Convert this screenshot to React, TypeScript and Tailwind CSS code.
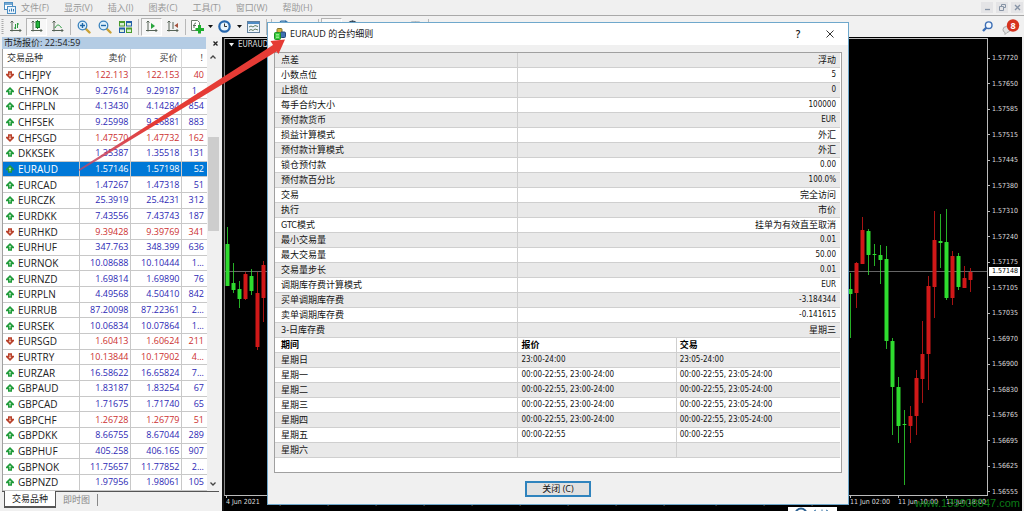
import { ReactNode } from "react";
import { Crosshair, FilePlus, Minus, MousePointer, MoveDiagonal, TrendingUp, Type } from "lucide-react";

type Quote = [symbol: string, bid: string, ask: string, spread: string, up: boolean];

const quotes: Quote[] = [
  ["CHFJPY", "122.113", "122.153", "40", false],
  ["CHFNOK", "9.27614", "9.29187", "1...", true],
  ["CHFPLN", "4.13430", "4.14284", "854", true],
  ["CHFSEK", "9.25998", "9.26881", "883", true],
  ["CHFSGD", "1.47570", "1.47732", "162", false],
  ["DKKSEK", "1.35387", "1.35518", "131", true],
  ["EURAUD", "1.57146", "1.57198", "52", true],
  ["EURCAD", "1.47267", "1.47318", "51", true],
  ["EURCZK", "25.3919", "25.4231", "312", true],
  ["EURDKK", "7.43556", "7.43743", "187", true],
  ["EURHKD", "9.39428", "9.39769", "341", false],
  ["EURHUF", "347.763", "348.399", "636", true],
  ["EURNOK", "10.08688", "10.10444", "1...", true],
  ["EURNZD", "1.69814", "1.69890", "76", true],
  ["EURPLN", "4.49568", "4.50410", "842", true],
  ["EURRUB", "87.20098", "87.22361", "2...", true],
  ["EURSEK", "10.06834", "10.07864", "1...", true],
  ["EURSGD", "1.60413", "1.60624", "211", false],
  ["EURTRY", "10.13844", "10.17902", "4...", false],
  ["EURZAR", "16.58622", "16.65824", "7...", true],
  ["GBPAUD", "1.83187", "1.83254", "67", true],
  ["GBPCAD", "1.71675", "1.71740", "65", true],
  ["GBPCHF", "1.26728", "1.26779", "51", false],
  ["GBPDKK", "8.66755", "8.67044", "289", true],
  ["GBPHUF", "405.258", "406.165", "907", true],
  ["GBPNOK", "11.75657", "11.77852", "2...", true],
  ["GBPNZD", "1.97956", "1.98061", "105", true],
];

const specs = [
  ["点差", "浮动"],
  ["小数点位", "5"],
  ["止损位", "0"],
  ["每手合约大小", "100000"],
  ["预付款货币", "EUR"],
  ["损益计算模式", "外汇"],
  ["预付款计算模式", "外汇"],
  ["锁仓预付款", "0.00"],
  ["预付款百分比", "100.0%"],
  ["交易", "完全访问"],
  ["执行", "市价"],
  ["GTC模式", "挂单为有效直至取消"],
  ["最小交易量", "0.01"],
  ["最大交易量", "50.00"],
  ["交易量步长", "0.01"],
  ["调期库存费计算模式", "EUR"],
  ["买单调期库存费", "-3.184344"],
  ["卖单调期库存费", "-0.141615"],
  ["3-日库存费", "星期三"],
];

const sessions = [
  ["星期日", "23:00-24:00", "23:05-24:00"],
  ["星期一", "00:00-22:55, 23:00-24:00", "00:00-22:55, 23:05-24:00"],
  ["星期二", "00:00-22:55, 23:00-24:00", "00:00-22:55, 23:05-24:00"],
  ["星期三", "00:00-22:55, 23:00-24:00", "00:00-22:55, 23:05-24:00"],
  ["星期四", "00:00-22:55, 23:00-24:00", "00:00-22:55, 23:05-24:00"],
  ["星期五", "00:00-22:55", "00:00-22:55"],
  ["星期六", "", ""],
];

const prices = [
  "1.57720", "1.57650", "1.57585", "1.57515", "1.57445", "1.57380", "1.57310", "1.57240", "1.57175",
  "1.57105", "1.57035", "1.56970", "1.56900", "1.56830", "1.56765", "1.56695", "1.56625", "1.56555",
];

const times = [
  "4 Jun 2021", "7 Jun 02:00", "7 Jun 10:00", "7 Jun 18:00", "8 Jun 02:00", "8 Jun 10:00", "8 Jun 18:00",
  "9 Jun 02:00", "9 Jun 10:00", "9 Jun 18:00", "10 Jun 02:00", "10 Jun 10:00", "10 Jun 18:00",
  "11 Jun 02:00", "11 Jun 10:00", "11 Jun 18:00",
];

// x, high, body top, body bottom, low, rising
const candles: [number, number, number, number, number, boolean][] = [
  [227, 227, 244, 286, 286, true],
  [233, 263, 283, 290, 293, true],
  [239, 281, 289, 299, 308, true],
  [245, 272, 274, 299, 300, false],
  [251, 269, 276, 291, 295, true],
  [257, 272, 293, 347, 350, false],
  [263, 261, 265, 298, 322, false],
  [850, 273, 289, 294, 338, true],
  [856, 262, 263, 293, 308, false],
  [862, 217, 230, 264, 264, false],
  [868, 229, 231, 255, 275, true],
  [874, 244, 254, 255, 266, true],
  [880, 245, 255, 260, 284, true],
  [886, 246, 259, 341, 349, true],
  [892, 338, 341, 387, 435, true],
  [898, 377, 387, 426, 443, true],
  [904, 410, 424, 425, 485, true],
  [910, 406, 416, 426, 443, false],
  [916, 370, 378, 416, 435, false],
  [922, 321, 354, 379, 403, false],
  [928, 276, 286, 354, 390, false],
  [934, 211, 240, 287, 318, false],
  [940, 214, 241, 243, 268, true],
  [946, 209, 242, 298, 300, true],
  [952, 251, 256, 298, 305, false],
  [958, 253, 256, 287, 290, true],
  [964, 266, 278, 288, 288, false],
  [970, 268, 272, 280, 292, false],
];

const menus = ["文件(F)", "显示(V)", "插入(I)", "图表(C)", "工具(T)", "窗口(W)", "帮助(H)"];

function ToolButton({ label, pressed, children }: { label: string; pressed?: boolean; children: ReactNode }) {
  return (
    <button
      type="button"
      aria-label={label}
      className={`flex h-[18px] w-[21px] shrink-0 items-center justify-center border ${
        pressed ? "border-[#b4b4b4] border-b-white border-r-white bg-[#f7f7f7]" : "border-transparent"
      }`}
    >
      {children}
    </button>
  );
}

function Divider() {
  return <span className="mx-[2px] h-4 w-px shrink-0 bg-[#b8b8b8]" />;
}

function Caret() {
  return (
    <button type="button" aria-label="更多" className="flex w-2 shrink-0 justify-center">
      <svg width="5" height="3" viewBox="0 0 5 3"><path d="M0 0h5L2.500 3z" fill="#111" /></svg>
    </button>
  );
}

function Axes({ children }: { children?: ReactNode }) {
  return (
    <svg width="13" height="13" viewBox="0 0 13 13" fill="none">
      <path d="M3 1v10.500M1 10.500h11M1.500 2.500L3 1l1.500 1.500M10.500 9L12 10.500 10.500 12" stroke="#566356" />
      {children}
    </svg>
  );
}

function Magnifier({ plus }: { plus?: boolean }) {
  return (
    <svg width="14" height="14" viewBox="0 0 14 14" fill="none">
      <path d="M8.500 8.500L12.500 12.500" stroke="#c9a136" strokeWidth="2.400" strokeLinecap="round" />
      <circle cx="5.500" cy="5.500" r="4.300" fill="#dff0fb" stroke="#3c83bd" strokeWidth="1.300" />
      <path d={plus ? "M3 5.500h5M5.500 3v5" : "M3 5.500h5"} stroke="#1f68a8" strokeWidth="1.400" />
    </svg>
  );
}

function DirectionIcon({ up }: { up: boolean }) {
  return (
    <svg width="8" height="8" viewBox="0 0 8 8" className="shrink-0">
      <g transform={up ? undefined : "rotate(180 4 4)"}>
        <path d="M4 0L8 4V5.300H6V7.700H2V5.300H0V4z" fill={up ? "#1f9a3a" : "#b8402a"} />
        <path d="M4 2.200L5.400 4H4.500V6.300H3.500V4H2.600z" fill={up ? "#c9f2c9" : "#f8d0c0"} />
      </g>
    </svg>
  );
}

function MenuBar() {
  return (
    <header className="flex h-4 shrink-0 items-center border-b border-[#a9a9a9] bg-[#f0f0f0] text-[9px] leading-[14px] text-[#999]">
      <svg width="12" height="12" viewBox="0 0 12 12" className="mr-[5px] ml-1" fill="none">
        <rect x="0.500" y="0.500" width="8" height="7" fill="#fff" stroke="#4d8fc4" />
        <path d="M1 2h7" stroke="#4d8fc4" strokeWidth="1.500" />
        <rect x="3.500" y="4.500" width="8" height="7" fill="#eaf4fc" stroke="#4d8fc4" />
        <path d="M5.500 9.500v-2M7.500 9.500V6.500M9.500 9.500V7" stroke="#3b7ab0" />
      </svg>
      <nav className="flex gap-[15px]">
        {menus.map((m) => (
          <button key={m} type="button" className="whitespace-nowrap">{m}</button>
        ))}
      </nav>
      <div className="mr-px ml-auto flex gap-[3px]">
        <button type="button" aria-label="最小化" className="flex h-[11px] w-3 items-center justify-center bg-[#e4e4e6]">
          <svg width="7" height="7" viewBox="0 0 7 7"><path d="M1 5.500h5" stroke="#8794a6" strokeWidth="1.300" /></svg>
        </button>
        <button type="button" aria-label="还原" className="flex h-[11px] w-3 items-center justify-center bg-[#e4e4e6]">
          <svg width="7" height="7" viewBox="0 0 7 7" fill="none" stroke="#8794a6">
            <path d="M2.500 2.500v-2h4v3h-2M0.500 2.500h4v4h-4z" />
          </svg>
        </button>
        <button type="button" aria-label="关闭" className="flex h-[11px] w-3 items-center justify-center bg-[#e4e4e6]">
          <svg width="7" height="7" viewBox="0 0 7 7"><path d="M1 1l5 5M6 1L1 6" stroke="#8794a6" strokeWidth="1.300" /></svg>
        </button>
      </div>
    </header>
  );
}

function Toolbar() {
  return (
    <div className="flex h-[21px] shrink-0 items-center overflow-hidden bg-[#f1f1f1]">
      <svg width="3" height="16" viewBox="0 0 3 16" className="mr-px ml-px shrink-0">
        <path d="M1.500 0v16" stroke="#aaa" strokeWidth="2" strokeDasharray="1 1" />
      </svg>
      <ToolButton label="柱状图">
        <Axes><path d="M6.500 4v5M8.500 3v5M6.500 8H5M8.500 4H10" stroke="#2b9a3e" /></Axes>
      </ToolButton>
      <ToolButton label="阴阳烛" pressed>
        <Axes>
          <path d="M7.500 0v9" stroke="#1d8f30" />
          <rect x="6" y="1.500" width="3.500" height="6" fill="#23b53b" stroke="#157a27" />
        </Axes>
      </ToolButton>
      <ToolButton label="折线图">
        <Axes><path d="M4 8C6 4 8 4 10.500 8" stroke="#2b9a3e" /></Axes>
      </ToolButton>
      <Divider />
      <ToolButton label="放大"><Magnifier plus /></ToolButton>
      <ToolButton label="缩小"><Magnifier /></ToolButton>
      <ToolButton label="平铺窗口">
        <svg width="13" height="12" viewBox="0 0 13 12">
          <path d="M0 0h6v5.500H0zM7 6.500h6V12H7z" fill="#4a9c2d" />
          <path d="M7 0h6v5.500H7zM0 6.500h6V12H0z" fill="#235fa8" />
          <path d="M1 2h4v2.500H1zM8 2h4v2.500H8zM1 8.500h4V11H1zM8 8.500h4V11H8z" fill="#d9efd6" />
        </svg>
      </ToolButton>
      <Divider />
      <ToolButton label="自动滚动" pressed>
        <Axes><path d="M6 3l4 3-4 3z" fill="#27a53c" /></Axes>
      </ToolButton>
      <ToolButton label="图表平移">
        <Axes>
          <path d="M7 2v7" stroke="#566356" />
          <path d="M12 3L8.500 5.500 12 8z" fill="#a5523c" />
        </Axes>
      </ToolButton>
      <Divider />
      <button type="button" aria-label="指标" className="flex w-[18px] shrink-0 justify-center">
        <svg width="14" height="14" viewBox="0 0 14 14" fill="none">
          <path d="M1.500 0.500h6l2 2v8h-8z" fill="#fff" stroke="#6d7d6d" />
          <path d="M4 8c0-3 0-5 2-5M3 5.500h3" stroke="#58705a" />
          <path d="M9.500 5v8.500M5.500 9.500H14" stroke="#1dae2d" strokeWidth="3" />
        </svg>
      </button>
      <Caret />
      <ToolButton label="时间周期">
        <svg width="13" height="13" viewBox="0 0 13 13" fill="none">
          <circle cx="6.500" cy="6.500" r="5.200" fill="#e8f3fc" stroke="#2767ad" strokeWidth="2.200" />
          <path d="M6.500 3.500v3H9" stroke="#333" />
        </svg>
      </ToolButton>
      <Caret />
      <ToolButton label="模板">
        <svg width="13" height="12" viewBox="0 0 13 12" fill="none">
          <rect x="0.500" y="0.500" width="12" height="11" fill="#eef5fb" stroke="#62809d" />
          <path d="M1 2h11" stroke="#4f8cc4" strokeWidth="2" />
          <path d="M2 6l2-1 2 1 2-1.500L11 5.500M2 9.500l2-1 2 1 2-1.500 3 1" stroke="#637d63" />
        </svg>
      </ToolButton>
      <Divider />
      <Divider />
      <ToolButton label="新订单"><FilePlus size={13} color="#2f6fa8" /></ToolButton>
      <ToolButton label="智能交易"><TrendingUp size={13} color="#2f6fa8" /></ToolButton>
      <Divider />
      <ToolButton label="光标" pressed><MousePointer size={12} color="#345" /></ToolButton>
      <ToolButton label="十字线"><Crosshair size={13} color="#345" /></ToolButton>
      <ToolButton label="水平线"><Minus size={13} color="#345" /></ToolButton>
      <ToolButton label="趋势线"><MoveDiagonal size={13} color="#345" /></ToolButton>
      <ToolButton label="文字"><Type size={13} color="#345" /></ToolButton>
      <Divider />
      <div className="mr-1 ml-auto flex items-center gap-[9px]">
        <button type="button" aria-label="搜索">
          <svg width="11" height="11" viewBox="0 0 11 11" fill="none" stroke="#3d6fb5">
            <path d="M4.500 6.500L1 10" strokeWidth="2.400" />
            <circle cx="6.700" cy="4.200" r="3.300" fill="#f4f9ff" strokeWidth="1.400" />
          </svg>
        </button>
        <button type="button" aria-label="8 条通知">
          <svg width="18" height="16" viewBox="0 0 18 16">
            <path d="M1 10.500a3.500 3 0 1 1 4 3L3 15.500v-2A3 3 0 0 1 1 10.500z" fill="#e3e3e3" stroke="#aaa" />
            <circle cx="11" cy="6.500" r="6.200" fill="#d5331f" />
            <text x="11" y="10" fontSize="9" fontWeight="700" fill="#fff" textAnchor="middle">8</text>
          </svg>
        </button>
      </div>
    </div>
  );
}

function MarketWatch() {
  return (
    <aside className="flex w-[222px] shrink-0 flex-col bg-[#f0f0f0] pl-[2px]">
      <div className="flex h-3 shrink-0 items-center justify-between pr-1">
        <h2 className="w-[204px] bg-[#b4cce4] pl-[2px] text-[9px] leading-3 text-[#222]">市场报价: 22:54:59</h2>
        <button type="button" aria-label="关闭市场报价">
          <svg width="5" height="5" viewBox="0 0 5 5"><path d="M0.500 0.500l4 4M4.500 0.500l-4 4" stroke="#222" strokeWidth="1.300" /></svg>
        </button>
      </div>
      <div className="flex min-h-0 flex-1 border-l border-[#a0a0a0]">
        <table className="h-full w-[204px] table-fixed border-collapse bg-white text-right text-[9px] leading-[14px] text-[#2c28b4]">
          <colgroup>
            <col className="w-[76px]" />
            <col className="w-[51px]" />
            <col className="w-[51px]" />
            <col />
          </colgroup>
          <thead>
            <tr className="h-[18px] border-b border-[#c8c8c8] text-[#333]">
              <th className="border-r border-[#d8d8d8] pl-1 text-left font-normal">交易品种</th>
              <th className="border-r border-[#d8d8d8] pr-[3px] font-normal">卖价</th>
              <th className="border-r border-[#d8d8d8] pr-[3px] font-normal">买价</th>
              <th className="pr-1 font-normal">!</th>
            </tr>
          </thead>
          <tbody>
            {quotes.map(([symbol, bid, ask, spread, up]) => {
              const selected = symbol === "EURAUD";
              const tone = selected ? "bg-[#0078d7] text-white" : up ? "" : "text-[#cc3030]";
              return (
                <tr key={symbol} className={`border-b border-[#c8c8c8] ${tone}`}>
                  <td className="border-r border-[#c8c8c8] p-0 pl-[3px]">
                    <div className={`flex items-center gap-1 text-[10px] ${selected ? "text-white" : "text-[#222]"}`}>
                      <DirectionIcon up={up} />
                      {symbol}
                    </div>
                  </td>
                  <td className="border-r border-[#c8c8c8] p-0 pr-px">{bid}</td>
                  <td className="border-r border-[#c8c8c8] p-0 pr-px">{ask}</td>
                  <td className="p-0 pr-[3px]">{spread}</td>
                </tr>
              );
            })}
          </tbody>
        </table>
        <div className="flex w-3 flex-col items-center py-1">
          <svg width="6" height="8" viewBox="0 0 6 8" fill="none"><path d="M0.500 5.500L3 3l2.500 2.500" stroke="#444" strokeWidth="1.300" /></svg>
          <div className="flex w-full flex-1 flex-col">
            <div className="flex-[76]" />
            <div className="ml-px flex-[94] bg-[#cdcdcd]" />
            <div className="flex-[249]" />
          </div>
          <svg width="6" height="6" viewBox="0 0 6 6" fill="none"><path d="M0.500 1.500L3 4l2.500-2.500" stroke="#444" strokeWidth="1.300" /></svg>
        </div>
      </div>
      <div className="mr-[3px] flex h-5 shrink-0 items-start border-t border-[#555] pl-[2px] text-[9px] leading-[14px]">
        <button type="button" className="-mt-px h-[17px] border border-t-0 border-b-2 border-[#555] bg-white px-[7px] text-[#222]">交易品种</button>
        <button type="button" className="mt-[2px] border-r border-[#888] px-[7px] leading-3 text-[#888]">即时图</button>
      </div>
    </aside>
  );
}

function Chart() {
  return (
    <main className="mr-[2px] flex min-w-0 flex-1 flex-col border-l-2 border-[#111] bg-black pt-px font-['DejaVu_Sans_Condensed','Noto_Sans_CJK_SC',sans-serif] text-[7px] leading-2 text-[#ddd]">
      <div className="flex min-h-0 flex-1">
        <div className="relative min-w-0 flex-1 border border-[#bbb] border-l-[#888]">
          <svg viewBox="225 39 762 456" preserveAspectRatio="none" className="absolute inset-0 h-full w-full" aria-hidden="true">
            <path d="M225 271.500H987" stroke="#666" />
            {candles.map(([x, high, top, bottom, low, rising]) => (
              <g key={x} fill={rising ? "#2fdc2f" : "#d01818"}>
                <rect x={x} y={high} width="1" height={low - high} opacity="0.800" />
                <rect x={x - 1.5} y={top} width="4" height={bottom - top} rx="0.500" />
              </g>
            ))}
          </svg>
          <p className="relative flex items-center gap-1 pt-[2px] pl-1 text-[8px]">
            <svg width="5" height="4" viewBox="0 0 5 4"><path d="M0 0h5L2.500 3.500z" fill="#eee" /></svg>
            EURAUD,H1
          </p>
        </div>
        <ul className="relative flex w-[34px] flex-col justify-between pt-4">
          {prices.map((p) => (
            <li key={p} className="flex items-center gap-[2px]">
              <span className="h-px w-[2px] bg-[#bbb]" />
              {p}
            </li>
          ))}
          <li className="absolute top-1/2 right-[2px] left-px bg-white pl-[3px] leading-[9px] text-black">1.57148</li>
        </ul>
      </div>
      <ul className="flex h-[15px] shrink-0 overflow-hidden pl-[2px]">
        {times.map((t) => (
          <li key={t} className="w-12 shrink-0 whitespace-nowrap">
            <span className="block h-[2px] w-px bg-[#bbb]" />
            {t}
          </li>
        ))}
      </ul>
    </main>
  );
}

function SpecDialog() {
  return (
    <section
      role="dialog"
      aria-labelledby="spec-title"
      className="absolute top-[22px] right-[175px] left-[267px] border border-[#6fa8cc] bg-[#f0f0f0] text-[#111]"
    >
      <div className="flex h-[22px] items-center bg-white pr-3 pl-[6px]">
        <svg width="12" height="12" viewBox="0 0 12 12">
          <rect x="3" y="0.500" width="5" height="5" rx="1" fill="#d5b13d" stroke="#84702a" />
          <rect x="6.500" y="4" width="5" height="5.500" rx="1" fill="#3f6fb3" stroke="#27477a" />
          <rect x="0.500" y="4.500" width="6" height="7" rx="1" fill="#38cc38" stroke="#1f8f26" />
          <path d="M2 6.500h3M2 8h3M2 9.500h3" stroke="#b4f3b0" strokeWidth="0.700" />
        </svg>
        <h1 id="spec-title" className="ml-1 text-[9px]">EURAUD 的合约细则</h1>
        <button type="button" aria-label="帮助" className="ml-auto w-5 text-[10px] font-semibold">?</button>
        <button type="button" aria-label="关闭窗口" className="ml-4 flex w-3 justify-center">
          <svg width="8" height="8" viewBox="0 0 8 8"><path d="M0.500 0.500l7 7M7.500 0.500l-7 7" stroke="#333" /></svg>
        </button>
      </div>
      <div className="px-[6px] pt-[7px] pb-[7px]">
        <div className="border border-[#a0a0a0] bg-white pr-px pb-[14px]">
          <table className="w-full table-fixed border-collapse font-['DejaVu_Sans_Condensed','Noto_Sans_CJK_SC',sans-serif] text-[8px] leading-[14px]">
            <colgroup>
              <col className="w-[43%]" />
              <col />
              <col className="w-[29%]" />
            </colgroup>
            <tbody>
              {specs.map(([name, value]) => (
                <tr key={name} className="border-b border-[#cfcfcf] odd:bg-[#e9e9e9]">
                  <th scope="row" className="border-r border-[#cfcfcf] p-0 pl-[6px] text-left text-[9px] font-normal">{name}</th>
                  <td colSpan={2} className={`p-0 pr-1 text-right ${/[\u4e00-\u9fff]/.test(value) ? "text-[9px]" : ""}`}>{value}</td>
                </tr>
              ))}
              <tr className="border-b border-[#cfcfcf] text-left text-[9px] text-black">
                <th className="border-r border-[#cfcfcf] p-0 pl-[6px]">期间</th>
                <th className="border-r border-[#cfcfcf] p-0 pl-[3px]">报价</th>
                <th className="p-0 pl-[3px]">交易</th>
              </tr>
              {sessions.map(([day, quote, trade]) => (
                <tr key={day} className="border-b border-[#cfcfcf] odd:bg-[#e9e9e9]">
                  <th scope="row" className="border-r border-[#cfcfcf] p-0 pl-[6px] text-left text-[9px] font-normal">{day}</th>
                  <td className="border-r border-[#cfcfcf] p-0 pl-[3px]">{quote}</td>
                  <td className="p-0 pl-[3px]">{trade}</td>
                </tr>
              ))}
            </tbody>
          </table>
        </div>
        <button type="button" className="mx-auto mt-2 block h-4 w-[66px] border-2 border-[#2f83bd] bg-[#e1e1e1] text-[9px] leading-3">
          关闭 (C)
        </button>
      </div>
    </section>
  );
}

export default function App() {
  return (
    <div className="relative flex h-screen flex-col overflow-hidden bg-[#f0f0f0] font-['Open_Sans','Noto_Sans_CJK_SC',sans-serif]">
      <MenuBar />
      <Toolbar />
      <div className="flex min-h-0 flex-1">
        <MarketWatch />
        <Chart />
      </div>
      <p className="absolute right-1 bottom-0 font-['Liberation_Sans',sans-serif] text-[11px] leading-4 text-[#0b7a16]">www.135908847.com</p>
      <div className="absolute bottom-0 left-[788px] flex h-1 w-[49px] justify-center bg-white">
        <svg width="36" height="4" viewBox="0 0 36 4" fill="none">
          <circle cx="6" cy="7" r="5.500" stroke="#2a5f8f" strokeWidth="2" />
          <path d="M19 4l2-1M27 4V2.500M33 4l-2-1" stroke="#3673a5" />
        </svg>
      </div>
      <SpecDialog />
      {/* pointer from the selected quote to the dialog title */}
      <svg width="290" height="180" viewBox="0 0 290 180" className="pointer-events-none absolute top-0 left-0" aria-hidden="true">
        <defs>
          <linearGradient id="arrow" gradientUnits="userSpaceOnUse" x1="79" y1="170" x2="150" y2="125">
            <stop offset="0" stopColor="#c04468" stopOpacity="0.800" />
            <stop offset="1" stopColor="#e53b35" />
          </linearGradient>
        </defs>
        <path d="M78.600 169.400L273 45 270.500 41 285 39.500 278.500 54 276.500 51.500 79.400 171z" fill="url(#arrow)" />
      </svg>
    </div>
  );
}
